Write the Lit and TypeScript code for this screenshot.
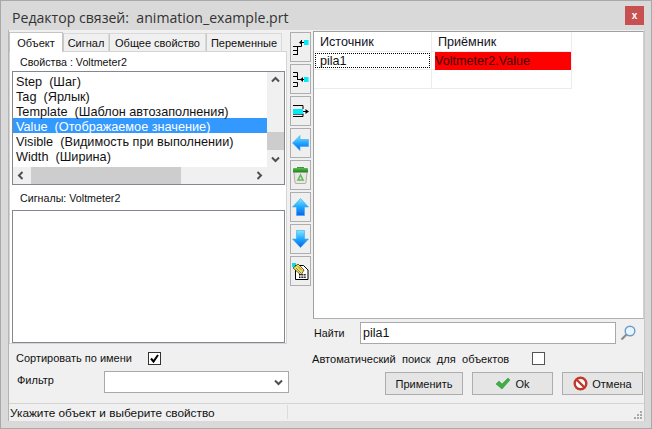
import { LitElement, html, css, svg } from "lit";
import { customElement } from "lit/decorators.js";

const items = ["Step  (Шаг)", "Tag  (Ярлык)", "Template  (Шаблон автозаполнения)", "Value  (Отображаемое значение)", "Visible  (Видимость при выполнении)", "Width  (Ширина)"];
const chev = (d: string) => svg`<svg width="9" height="7" viewBox="0 0 9 7"><path d="${d}" fill="none" stroke="#505050" stroke-width="2"/></svg>`;
const defs = svg`<defs><linearGradient id="blue" x1="0" y1="0" x2="0" y2="1"><stop offset="0" stop-color="#7fe6ff"/><stop offset=".5" stop-color="#1fa8ff"/><stop offset="1" stop-color="#0a62e8"/></linearGradient><linearGradient id="lid" x1="0" y1="0" x2="0" y2="1"><stop offset="0" stop-color="#58c048"/><stop offset="1" stop-color="#1c7a20"/></linearGradient></defs>`;
const icons = [
  svg`<svg width="17" height="18" viewBox="0 0 17 18"><path d="M1 8.5H5.5M1 12.5H5.5M1 16.5H5.5M5.5 8V17M5.5 8.5H9.5M9.5 4.5H12" fill="none" stroke="#000"/><path d="M7 4.5l3-2.5v5z" fill="#000"/><path d="M9.5 2V8.5" stroke="#000"/><rect x="12" y="2" width="4.5" height="5" fill="#00eaf8"/></svg>`,
  svg`<svg width="17" height="18" viewBox="0 0 17 18"><path d="M1 2.5H5.5V6.5H1M5.5 4.5V10M1 12.5H5.5V16.5H1M5.5 9.5H12" fill="none" stroke="#000"/><path d="M8 9.5l3-2.5v5z" fill="#000"/><rect x="12" y="7" width="4.5" height="5" fill="#00eaf8"/></svg>`,
  svg`<svg width="17" height="18" viewBox="0 0 17 18"><path d="M1 3.5H11V7M1 14.5H11V11.5M11 9.5H15" fill="none" stroke="#000"/><path d="M13.5 7L17 9.5l-3.5 2.5z" fill="#000"/><rect x="1" y="7" width="10" height="5" fill="#00eaf8"/><path d="M1 12.5H11" stroke="#000" stroke-width=".6"/></svg>`,
  svg`<svg width="17" height="16" viewBox="0 0 17 16">${defs}<path d="M8 .5V4.5H16.5V11.5H8V15.5L.5 8z" fill="url(#blue)" stroke="#3aa8f0" stroke-width=".6"/></svg>`,
  svg`<svg width="17" height="18" viewBox="0 0 17 18">${defs}<path d="M5 2.5V1H12V2.5z" fill="#3a9a38"/><path d="M1 3C1 2.4 1.5 2 2 2H15C15.5 2 16 2.4 16 3V6.5H1z" fill="url(#lid)"/><path d="M2 6.5H15L14 16.5C14 17 13.6 17.5 13 17.5H4C3.4 17.5 3 17 3 16.5z" fill="#e8e8de" stroke="#8a8a80" stroke-width=".6"/><path d="M6 14l2.5-5 2.5 5z" fill="none" stroke="#62b862" stroke-width="1.6"/></svg>`,
  svg`<svg width="17" height="18" viewBox="0 0 17 18">${defs}<path d="M8.5 .5L16.5 9H12.5V17.5H4.5V9H.5z" fill="url(#blue)" stroke="#3aa8f0" stroke-width=".6"/></svg>`,
  svg`<svg width="17" height="18" viewBox="0 0 17 18">${defs}<path d="M8.5 17.5L16.5 9H12.5V.5H4.5V9H.5z" fill="url(#blue)" stroke="#3aa8f0" stroke-width=".6"/></svg>`,
  svg`<svg width="17" height="17" viewBox="0 0 17 17"><rect width="4" height="4" fill="#00e0f0"/><path d="M3.5 2.5H11.5L16 7V16.5H3.5z" fill="#fff" stroke="#000"/><path d="M1 5L6 1l6 6-3 5z" fill="#f4e04a" stroke="#222" stroke-width=".7"/><path d="M4 5l5 5M6 3.5l4 4" stroke="#666" stroke-width=".8"/><path d="M7 11.5H14M7 13H14M7 14.5H14" stroke="#000" stroke-dasharray="1 .6"/></svg>`,
];

@customElement("app-root")
export class AppRoot extends LitElement {
  static styles = css`
    :host { display: block; width: 652px; height: 429px; box-sizing: border-box; background: #d9d9d9; border: 1px solid #a8a8a8; font: 11px "Liberation Sans", Arial, sans-serif; color: #111; overflow: hidden; }
    .title { height: 29px; display: flex; justify-content: space-between; padding: 0 7px 0 11px; font: 14.1px "Open Sans", sans-serif; color: #333; }
    .title span { padding-top: 7px; }
    .title span, .row, .auto span { white-space: pre; }
    .close { width: 19px; height: 19px; margin-top: 5px; background: #c75050; color: #fff; display: flex; align-items: center; justify-content: center; font: bold 10px "Liberation Sans", sans-serif; }
    .client { margin-left: 7px; width: 635px; height: 391px; background: #f0f0f0; display: flex; flex-direction: column; border-left: 1px solid #b4b4b4; border-right: 1px solid #c8c8c8; }
    .main { height: 372px; display: flex; }
    .left { width: 281px; display: flex; flex-direction: column; }
    .tabs { display: flex; height: 21px; padding-top: 2px; align-items: flex-end; box-sizing: border-box; }
    .tab { height: 18px; box-sizing: border-box; border: 1px solid #d9d9d9; border-left-color: #c8c8c8; background: #f0f0f0; display: flex; align-items: center; justify-content: center; font-size: 11px; border-bottom: none; }
    .tab.on { height: 20px; width: 54px; background: #fff; border: 1px solid #c4c4c4; border-bottom: none; margin-bottom: -1px; position: relative; z-index: 1; }
    .pane { height: 293px; width: 278px; box-sizing: border-box; background: #fff; border: 1px solid #d4d4d4; padding: 0 0 0 2px; }
    .cap { height: 19px; padding-left: 8px; display: flex; align-items: center; font-size: 10.7px; }
    .list { width: 273px; height: 114px; box-sizing: border-box; border: 1px solid #828790; display: grid; grid-template-columns: 1fr 17px; grid-template-rows: 95px 17px; background: #f0f0f0; }
    .rows { background: #fff; padding-top: 1px; overflow: hidden; font-size: 12.7px; }
    .row { height: 15px; line-height: 18px; padding-left: 3px; }
    .row.sel { background: #3399ff; color: #fff; }
    .vbar { display: flex; flex-direction: column; justify-content: space-between; align-items: center; padding: 4px 0; position: relative; box-sizing: border-box; }
    .vthumb { position: absolute; top: 60px; left: 0; width: 17px; height: 18px; background: #cdcdcd; }
    .hbar { display: flex; align-items: center; justify-content: space-between; padding: 0 4px; position: relative; }
    .hthumb { position: absolute; left: 18px; top: 0; width: 150px; height: 17px; background: #cdcdcd; }
    .corner { background: #f0f0f0; }
    .siglabel { height: 25px; padding: 1px 0 0 8px; box-sizing: border-box; display: flex; align-items: center; font-size: 10.7px; }
    .sigbox { width: 273px; height: 133px; box-sizing: border-box; border: 1px solid #828790; background: #fff; }
    .lower { padding: 7px 0 0 7px; }
    .sort { display: flex; align-items: center; height: 14px; }
    .sort span { width: 132px; }
    .cb { width: 13px; height: 13px; box-sizing: border-box; border: 1px solid #333; background: #fff; display: flex; }
    .filter { display: flex; align-items: center; margin-top: 6px; }
    .filter span { width: 87px; padding-left: 1px; margin-top: -5px; }
    .select { width: 185px; height: 22px; box-sizing: border-box; border: 1px solid #a9a9a9; background: #fff; display: flex; align-items: center; justify-content: flex-end; padding-right: 5px; }
    .tools { width: 21px; margin: 2px 2px 0 0; display: flex; flex-direction: column; gap: 2px; }
    .tool { width: 21px; height: 30px; box-sizing: border-box; border: 1px solid #adadad; background: #efefef; display: flex; align-items: center; justify-content: center; }
    .right { width: 331px; padding-top: 1px; display: flex; flex-direction: column; }
    .gridbox { height: 288px; box-sizing: border-box; background: #fff; border: 1px solid #a0a0a0; border-right-color: #d0d0d0; border-bottom-color: #b0b0b0; }
    .grid { display: grid; grid-template-columns: 118px 140px; grid-template-rows: 20px 18px 19px; width: 258px; }
    .cell { border-right: 1px solid #ececec; border-bottom: 1px solid #ececec; display: flex; align-items: center; padding-left: 6px; font-size: 12.6px; box-sizing: border-box; }
    .head { background: #fff; color: #112; }
    .focus { position: relative; padding-left: 6px; }
    .focus::after { content: ""; position: absolute; inset: 1px; border: 1px dotted #000; }
    .red { padding-left: 3px; background: #fff; color: #400; }
    .red b { font-weight: normal; background: #f00; width: 136px; height: 18px; line-height: 18px; display: block; }
    .find { display: flex; align-items: center; margin-top: 3px; height: 22px; font-size: 10.7px; }
    .find span { width: 46px; padding-left: 1px; }
    .input { width: 256px; height: 22px; box-sizing: border-box; border: 1px solid #a9a9a9; background: #fff; font-size: 12.5px; display: flex; align-items: center; padding-left: 2px; }
    .mag { margin-left: 4px; display: flex; }
    .auto { display: flex; align-items: center; margin: 8px 0 0 -1px; height: 13px; font-size: 11.1px; }
    .auto span { width: 220px; }
    .auto .cb { border-color: #555; }
    .btns { display: flex; margin: 7px 0 0 72px; gap: 9px; }
    .btn { height: 23px; box-sizing: border-box; border: 1px solid #adadad; background: #e5e5e5; display: flex; align-items: center; justify-content: center; gap: 4px; font-size: 11px; }
    .status { height: 18px; margin-top: 1px; box-sizing: border-box; border-top: 1px solid #d4d4d4; background: #f0f0f0; display: flex; align-items: center; padding-left: 1px; position: relative; font-size: 11.8px; }
    .status .sep { position: absolute; left: 278px; top: 1px; bottom: 2px; width: 1px; background: #dcdcdc; }
    .grip { position: absolute; right: 1px; bottom: 1px; display: flex; }
  `;
  render() {
    return html`
      <div class="title"><span>Редактор связей:  animation_example.prt</span><div class="close">x</div></div>
      <div class="client">
        <div class="main">
          <div class="left">
            <div class="tabs">
              <div class="tab on">Объект</div>
              <div class="tab" style="width:46px">Сигнал</div>
              <div class="tab" style="width:97px">Общее свойство</div>
              <div class="tab" style="width:76px">Переменные</div>
            </div>
            <div class="pane">
              <div class="cap">Свойства : Voltmeter2</div>
              <div class="list">
                <div class="rows">${items.map((t, i) => html`<div class="row ${i === 3 ? "sel" : ""}">${t}</div>`)}</div>
                <div class="vbar"><div class="vthumb"></div>${chev("M1 5.5l3.5-3.5 3.5 3.5")}${chev("M1 1.5l3.5 3.5 3.5-3.5")}</div>
                <div class="hbar"><div class="hthumb"></div><svg width="7" height="9" viewBox="0 0 7 9"><path d="M5.5 1L2 4.5 5.5 8" fill="none" stroke="#505050" stroke-width="2"/></svg><svg width="7" height="9" viewBox="0 0 7 9"><path d="M1.5 1L5 4.5 1.5 8" fill="none" stroke="#505050" stroke-width="2"/></svg></div>
                <div class="corner"></div>
              </div>
              <div class="siglabel">Сигналы: Voltmeter2</div>
              <div class="sigbox"></div>
            </div>
            <div class="lower">
              <div class="sort"><span>Сортировать по имени</span><div class="cb"><svg width="11" height="11" viewBox="0 0 11 11"><path d="M2 5.5L4.5 8.5 9 2" fill="none" stroke="#000" stroke-width="2"/></svg></div></div>
              <div class="filter"><span>Фильтр</span><div class="select">${chev("M1 1.5l3.5 3.5 3.5-3.5")}</div></div>
            </div>
          </div>
          <div class="tools">${icons.map((i) => html`<div class="tool">${i}</div>`)}</div>
          <div class="right">
            <div class="gridbox">
              <div class="grid">
                <div class="cell head">Источник</div><div class="cell head">Приёмник</div>
                <div class="cell focus">pila1</div><div class="cell red"><b>Voltmeter2.Value</b></div>
                <div class="cell"></div><div class="cell"></div>
              </div>
            </div>
            <div class="find"><span>Найти</span><div class="input">pila1</div>
              <div class="mag"><svg width="16" height="16" viewBox="0 0 16 16"><circle cx="10" cy="6" r="4.8" fill="#e8f4ff" stroke="#6d9cc8" stroke-width="1.4"/><path d="M6.5 9.5L1.5 14.5" stroke="#8a8a8a" stroke-width="2.2"/></svg></div></div>
            <div class="auto"><span>Автоматический  поиск  для  объектов</span><div class="cb"></div></div>
            <div class="btns">
              <div class="btn" style="width:78px">Применить</div>
              <div class="btn" style="width:81px"><svg width="16" height="13" viewBox="0 0 16 13"><path d="M1 7l3-3 3 3 6-6 2 2-8 9z" fill="#3cb043" stroke="#2a8a30" stroke-width=".5"/></svg>Ok</div>
              <div class="btn" style="width:81px"><svg width="15" height="15" viewBox="0 0 15 15"><circle cx="7.5" cy="7.5" r="5.8" fill="#fff" stroke="#c0392b" stroke-width="2.4"/><path d="M3.5 3.5l8 8" stroke="#c0392b" stroke-width="2.4"/></svg>Отмена</div>
            </div>
          </div>
        </div>
        <div class="status">Укажите объект и выберите свойство<div class="sep"></div>
          <div class="grip"><svg width="10" height="10" viewBox="0 0 10 10" fill="#a8a8a8"><rect x="7" y="1" width="2" height="2"/><rect x="4" y="4" width="2" height="2"/><rect x="7" y="4" width="2" height="2"/><rect x="1" y="7" width="2" height="2"/><rect x="4" y="7" width="2" height="2"/><rect x="7" y="7" width="2" height="2"/></svg></div>
        </div>
      </div>
    `;
  }
}
